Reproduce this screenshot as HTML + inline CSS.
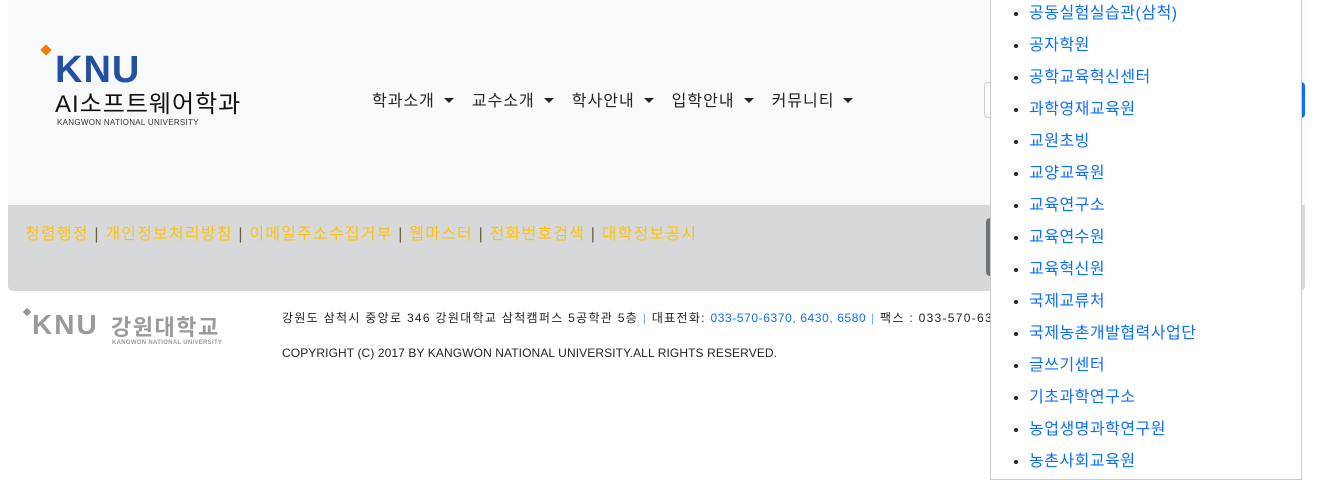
<!DOCTYPE html>
<html><head><meta charset="utf-8"><style>
*{margin:0;padding:0;box-sizing:border-box}
body{width:1318px;height:477px;overflow:hidden;background:#fff;font-family:"Liberation Sans","Noto Sans CJK KR",sans-serif;position:relative}
.hdr{position:absolute;left:8px;top:0;width:1297px;height:205px;background:#f8f9fa}
.gray{position:absolute;left:8px;top:205px;width:1297px;height:86px;background:#d7d8da;border-radius:0 0 5px 5px}
.links{position:absolute;left:25px;top:220px;font-size:16px;color:#ffc107;white-space:nowrap;letter-spacing:1.2px}
.links b{font-weight:normal;color:#6b5a3a}
.nav{position:absolute;left:372px;top:87px;font-size:16px;color:#212529;white-space:nowrap;letter-spacing:1px}
.nav span{margin-right:18px}
.nav span:after{content:"";display:inline-block;margin-left:9px;vertical-align:3px;border-top:5px solid #212529;border-left:5px solid transparent;border-right:5px solid transparent}
.dd{position:absolute;left:990px;top:0;width:312px;height:480px;background:#fff;border:1px solid #ccc;border-top:none}
.dd ul{list-style:disc;padding-left:38px;margin-top:-2px}
.dd li{height:32px;line-height:32px;font-size:16px;color:#0d6efd;letter-spacing:0.5px}
.dd li::marker{color:#212529}
.ft{position:absolute;left:282px;font-size:12px;color:#212529;white-space:nowrap}
</style></head><body>
<div class="hdr"></div>
<div style="position:absolute;left:984px;top:82px;width:10px;height:36px;border:1px solid #ccc;border-radius:4px 0 0 4px;background:#fff"></div>
<div style="position:absolute;left:1295px;top:82px;width:10px;height:36px;background:#0d6efd;border-radius:0 4px 4px 0"></div>
<div style="position:absolute;left:42px;top:46px;width:8px;height:8px;background:#f07c00;transform:rotate(45deg)"></div>
<div style="position:absolute;left:55px;top:53px;font:bold 38px/34px 'Liberation Sans',sans-serif;color:#2350a0;letter-spacing:1px">KNU</div>
<div style="position:absolute;left:55px;top:84px;font-size:24px;color:#111;letter-spacing:1px">AI소프트웨어학과</div>
<div style="position:absolute;left:57px;top:118px;font-size:8px;color:#333;letter-spacing:0.3px">KANGWON NATIONAL UNIVERSITY</div>
<div class="nav"><span>학과소개</span><span>교수소개</span><span>학사안내</span><span>입학안내</span><span>커뮤니티</span></div>
<div class="gray"></div>
<div style="position:absolute;left:986px;top:218px;width:8px;height:58px;background:#6c757d;border-radius:4px 0 0 4px"></div>
<div class="links">청렴행정 <b>|</b> 개인정보처리방침 <b>|</b> 이메일주소수집거부 <b>|</b> 웹마스터 <b>|</b> 전화번호검색 <b>|</b> 대학정보공시</div>
<div style="position:absolute;left:24px;top:309px;width:6px;height:6px;background:#999;transform:rotate(45deg)"></div>
<div style="position:absolute;left:32px;top:313px;font:bold 28px/24px 'Liberation Sans',sans-serif;color:#9a9a9a;letter-spacing:2px">KNU</div>
<div style="position:absolute;left:111px;top:310px;font-size:22px;font-weight:bold;color:#9a9a9a;letter-spacing:1.5px">강원대학교</div>
<div style="position:absolute;left:112px;top:340px;font-size:6px;font-weight:bold;color:#9a9a9a;letter-spacing:0.3px">KANGWON NATIONAL UNIVERSITY</div>
<div class="ft" style="top:309px;letter-spacing:1.3px">강원도 삼척시 중앙로 346 강원대학교 삼척캠퍼스 5공학관 5층 <span style="color:#6ea8fe">|</span> 대표전화: <span style="color:#0d6efd;letter-spacing:0.6px">033-570-6370, 6430, 6580</span> <span style="color:#6ea8fe">|</span> 팩스 : 033-570-6389</div>
<div class="ft" style="top:346px;letter-spacing:0.1px">COPYRIGHT (C) 2017 BY KANGWON NATIONAL UNIVERSITY.ALL RIGHTS RESERVED.</div>
<div class="dd"><ul>
<li>공동실험실습관(삼척)</li><li>공자학원</li><li>공학교육혁신센터</li><li>과학영재교육원</li><li>교원초빙</li><li>교양교육원</li><li>교육연구소</li><li>교육연수원</li><li>교육혁신원</li><li>국제교류처</li><li>국제농촌개발협력사업단</li><li>글쓰기센터</li><li>기초과학연구소</li><li>농업생명과학연구원</li><li>농촌사회교육원</li>
</ul></div>
</body></html>
